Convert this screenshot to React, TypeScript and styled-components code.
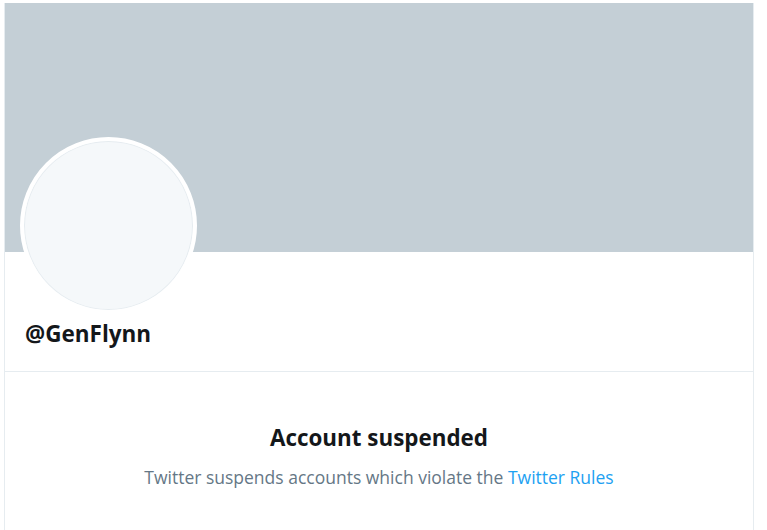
import React from "react";
import styled, { createGlobalStyle } from "styled-components";

const Global = createGlobalStyle`
  body {
    margin: 0;
    background: #ffffff;
    font-family: "Open Sans", "Noto Sans", sans-serif;
  }
`;

const Column = styled.main`
  margin: 3px 0 0 4px;
  width: 748px;
  border-left: 1px solid #e6ecf0;
  border-right: 1px solid #e6ecf0;
  min-height: 527px;
  box-sizing: content-box;
`;

const Banner = styled.div`
  height: 249px;
  background: #c4cfd6;
`;

const ProfileHeader = styled.section`
  display: flex;
  flex-direction: column;
  padding: 0 15px;
  border-bottom: 1px solid #e6ecf0;
  height: 119px;
`;

const Avatar = styled.div`
  width: 169px;
  height: 169px;
  margin-top: -115px;
  border-radius: 50%;
  border: 4px solid #ffffff;
  background: #f5f8fa;
  box-shadow: inset 0 0 0 1px #e6ecf0;
  flex: none;
`;

const Handle = styled.h2`
  margin: 5px 0 0 5px;
  font-size: 22.5px;
  font-weight: 700;
  line-height: 30px;
  color: #14171a;
`;

const Notice = styled.section`
  display: flex;
  flex-direction: column;
  align-items: center;
  padding-top: 51px;
`;

const Title = styled.h1`
  margin: 0;
  font-size: 22.4px;
  font-weight: 700;
  line-height: 30px;
  color: #14171a;
`;

const Body = styled.p`
  margin: 12px 0 0;
  font-size: 17.5px;
  line-height: 24px;
  color: #657786;
`;

const Link = styled.a`
  color: #1da1f2;
  text-decoration: none;
`;

export default function App() {
  return (
    <>
      <Global />
      <Column>
        <Banner />
        <ProfileHeader>
          <Avatar />
          <Handle>@GenFlynn</Handle>
        </ProfileHeader>
        <Notice>
          <Title>Account suspended</Title>
          <Body>
            Twitter suspends accounts which violate the <Link href="#">Twitter Rules</Link>
          </Body>
        </Notice>
      </Column>
    </>
  );
}
